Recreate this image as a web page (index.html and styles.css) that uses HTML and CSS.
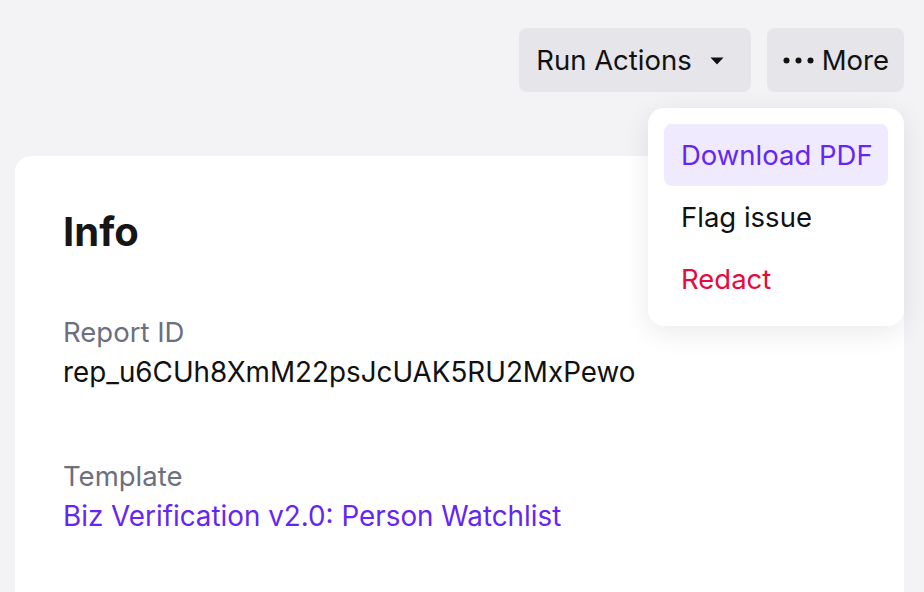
FILE: index.html
```html
<!DOCTYPE html>
<html lang="en">
<head>
<meta charset="utf-8">
<title>Report</title>
<link rel="stylesheet" href="styles.css">
</head>
<body>
<div class="page">
  <div class="toolbar">
    <button class="btn btn-run">Run Actions
      <svg class="caret" width="14" height="8" viewBox="0 0 14 8"><path d="M0.5 0.5h13L7 7.5z" fill="#111"/></svg>
    </button>
    <div class="more-wrap">
      <button class="btn btn-more">
        <svg class="dots" width="31" height="7" viewBox="0 0 31 7"><circle cx="3.5" cy="3.5" r="3" fill="#111"/><circle cx="15.5" cy="3.5" r="3" fill="#111"/><circle cx="27.5" cy="3.5" r="3" fill="#111"/></svg>
        More
      </button>
      <ul class="menu">
        <li class="menu-item active">Download PDF</li>
        <li class="menu-item">Flag issue</li>
        <li class="menu-item danger">Redact</li>
      </ul>
    </div>
  </div>
  <section class="card">
    <h2 class="card-title">Info</h2>
    <div class="field">
      <div class="label">Report ID</div>
      <div class="value">rep_u6CUh8XmM22psJcUAK5RU2MxPewo</div>
    </div>
    <div class="field">
      <div class="label">Template</div>
      <a class="value link" href="#">Biz Verification v2.0: Person Watchlist</a>
    </div>
  </section>
</div>
</body>
</html>
```
FILE: styles.css
```css
* { box-sizing: border-box; }
html, body { margin: 0; padding: 0; }
body {
  background: #f3f3f6;
  font-family: Inter, "Noto Sans", sans-serif;
  color: #111;
  overflow: hidden;
}
.page {
  padding: 28px 20px 0 15px;
}
.toolbar {
  display: flex;
  justify-content: flex-end;
  gap: 16px;
  height: 64px;
}
.btn {
  height: 64px;
  border: 0;
  border-radius: 8px;
  background: #e5e5ea;
  font-family: inherit;
  font-size: 27.5px;
  color: #111;
  padding: 0 17px;
  display: flex;
  align-items: center;
  cursor: pointer;
  white-space: nowrap;
}
.btn-run { gap: 18px; padding-left: 17px; padding-right: 27px; }
.caret { margin-top: 1px; }
.btn-more { gap: 8px; padding: 0 15px 0 16px; }
.more-wrap { position: relative; }
.menu {
  position: absolute;
  right: 0;
  top: 80px;
  width: 256px;
  margin: 0;
  padding: 16px;
  list-style: none;
  background: #fff;
  border-radius: 16px;
  box-shadow: 0 6px 28px rgba(20, 20, 40, 0.09);
  z-index: 2;
}
.menu-item {
  height: 62px;
  display: flex;
  align-items: center;
  padding: 0 17px;
  font-size: 27.5px;
  border-radius: 8px;
  white-space: nowrap;
}
.menu-item.active { background: #efeafe; color: #6526f5; }
.menu-item.danger { color: #e8093f; }
.card {
  margin-top: 64px;
  background: #fff;
  border-radius: 16px 16px 0 0;
  padding: 52px 48px 60px;
  min-height: 460px;
}
.card-title {
  margin: 0 0 56px;
  font-family: Inter, sans-serif;
  font-weight: 700;
  font-size: 40px;
  line-height: 48px;
  color: #161616;
}
.field + .field { margin-top: 64px; }
.label {
  font-size: 27.5px;
  line-height: 40px;
  color: #6c6f80;
}
.value {
  display: block;
  font-size: 27.8px;
  line-height: 40px;
  color: #111;
}
.link { color: #6526f5; text-decoration: none; }
```
